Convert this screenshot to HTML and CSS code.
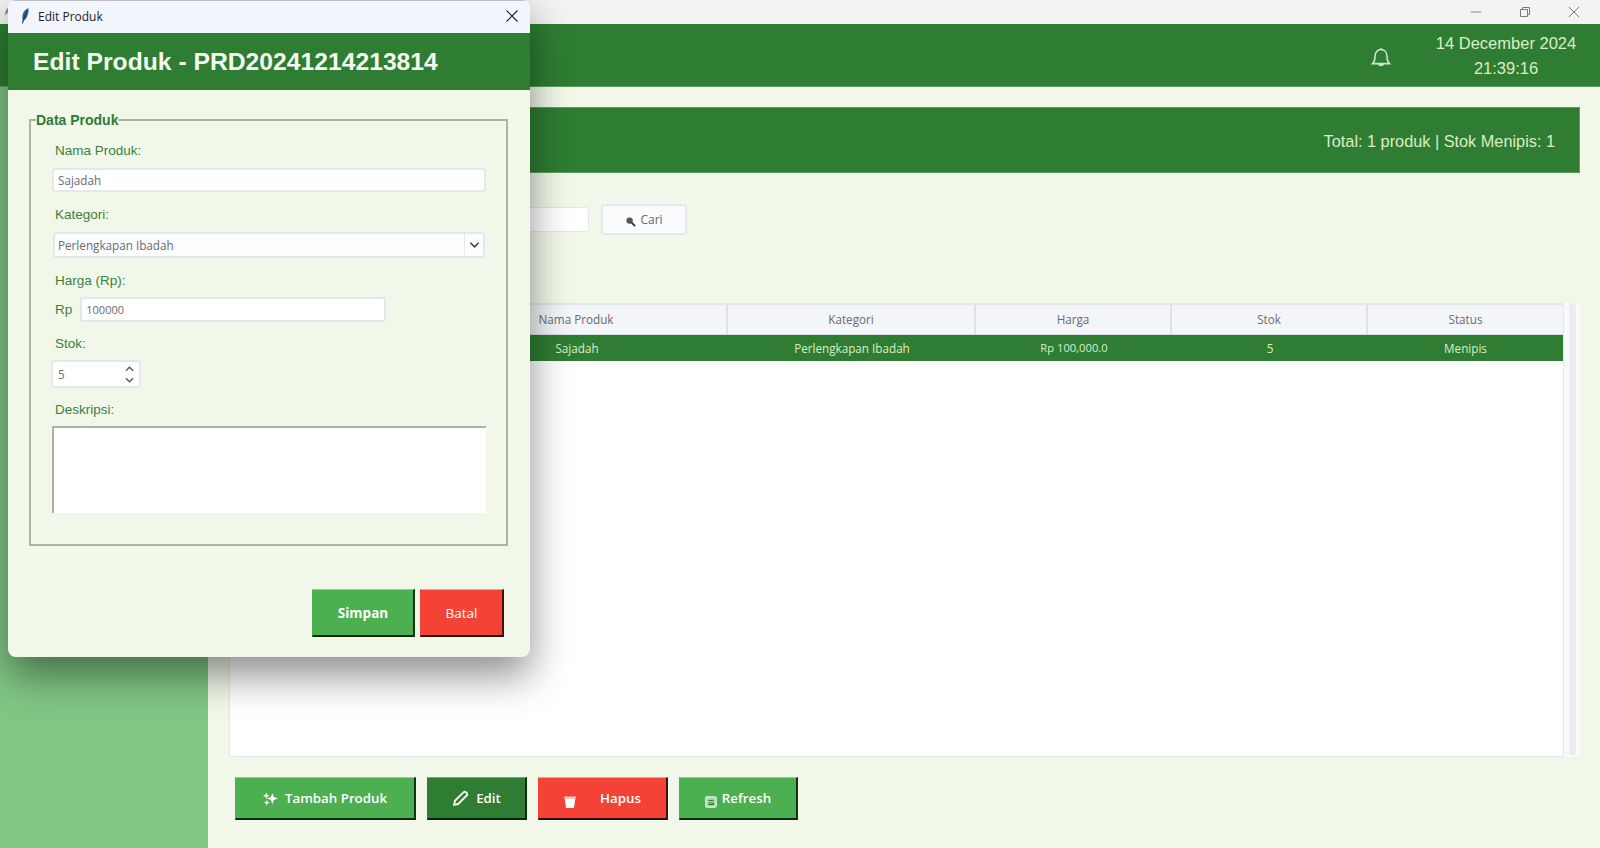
FILE: index.html
```html
<!DOCTYPE html>
<html lang="id">
<head>
<meta charset="utf-8">
<title>Edit Produk</title>
<link rel="stylesheet" href="styles.css">
</head>
<body>
<div class="app">
  <div class="titlebar">
    <svg class="app-icon" viewBox="0 0 12 20" width="7" height="12"><path d="M10 1C5 3 2 8 2 13l-1 5 2-4c4-2 7-7 7-13z" fill="#7d8a96"/></svg>
    <div class="win-controls">
      <svg class="win-btn" viewBox="0 0 12 12" width="12" height="12"><path d="M1 6h10" stroke="#8a8a8a" fill="none"/></svg>
      <svg class="win-btn" viewBox="0 0 12 12" width="12" height="12"><path d="M1.5 3.5h7v7h-7zM3.5 3.5v-2h7v7h-2" stroke="#7a7a7a" fill="none"/></svg>
      <svg class="win-btn" viewBox="0 0 12 12" width="12" height="12"><path d="M1 1l10 10M11 1L1 11" stroke="#7a7a7a" fill="none"/></svg>
    </div>
  </div>
  <header class="header">
    <svg class="bell" viewBox="0 0 20 20" width="24" height="24"><path d="M3 15.500c1.600-1.600 2-3 2-6 0-3.300 2-5.700 5-5.700s5 2.400 5 5.700c0 3 .4 4.400 2 6zM8 16c.4 1.300 3.600 1.300 4 0M10 3.800V2.500" fill="none" stroke="#c8e6c9" stroke-width="1.300"/></svg>
    <div class="clock">
      <div>14 December 2024</div>
      <div>21:39:16</div>
    </div>
  </header>
  <div class="main">
    <aside class="sidebar"></aside>
    <section class="content">
      <div class="banner">Total: 1 produk | Stok Menipis: 1</div>
      <div class="search">
        <input class="search-input" type="text" aria-label="Cari produk">
        <button class="search-btn" type="button">
          <svg viewBox="0 0 12 12" width="11" height="11"><circle cx="5" cy="5" r="3.500" fill="#555"/><path d="M7 7l4 4" stroke="#333" stroke-width="2"/></svg>
          Cari
        </button>
      </div>
      <div class="table-area">
        <div class="table">
          <div class="row row-head">
            <div class="cell"></div>
            <div class="cell">Nama Produk</div>
            <div class="cell">Kategori</div>
            <div class="cell">Harga</div>
            <div class="cell">Stok</div>
            <div class="cell">Status</div>
          </div>
          <div class="row row-selected">
            <div class="cell"></div>
            <div class="cell">Sajadah</div>
            <div class="cell">Perlengkapan Ibadah</div>
            <div class="cell cell-num">Rp 100,000.0</div>
            <div class="cell">5</div>
            <div class="cell">Menipis</div>
          </div>
        </div>
        <div class="scrollbar"><div class="scroll-thumb"></div></div>
      </div>
      <div class="actions">
        <button class="act act-add" type="button">
          <svg viewBox="0 0 16 16" width="15" height="15"><path d="M10 2l1.500 4.500L16 8l-4.500 1.500L10 14 8.500 9.500 4 8l4.500-1.500z" fill="#fff"/><path d="M3.500 1.500l1 2.500 2.500 1-2.500 1-1 2.500-1-2.500L0 5l2.500-1zM4 9.500l.9 2 2.100.9-2.100.9-.9 2.200-.9-2.200L1 12.400l2.100-.9z" fill="#fff"/></svg>
          Tambah Produk
        </button>
        <button class="act act-edit" type="button">
          <svg viewBox="0 0 16 16" width="17" height="17"><path d="M2 14l.8-3.800L10.800 2.200a1.700 1.700 0 0 1 2.400 0l.6.6a1.700 1.700 0 0 1 0 2.400L5.800 13.200z" fill="none" stroke="#f1f8e9" stroke-width="1.800"/></svg>
          Edit
        </button>
        <button class="act act-del" type="button">
          <svg class="icon-low" viewBox="0 0 12 12" width="12" height="12"><path d="M0 .5h12L11.600 3H.4z" fill="#fbc9c4"/><path d="M.8 3h10.400l-1.200 9H2z" fill="#fff"/></svg>
          Hapus
        </button>
        <button class="act act-refresh" type="button">
          <svg class="icon-low" viewBox="0 0 12 12" width="12" height="12"><rect x=".8" y=".8" width="10.400" height="10.400" rx="1.500" fill="#a5d6a7" stroke="#e8f5e9" stroke-width="1.200"/><path d="M3.500 4.500h5M3.500 7h5v1.500h-5" fill="none" stroke="#2e7d32"/></svg>
          Refresh
        </button>
      </div>
    </section>
  </div>
</div>

<div class="dialog">
  <div class="dlg-title">
    <svg class="feather" viewBox="0 0 8 16" width="8" height="16"><path d="M7.500.3C4 1.300 1.500 4.700 1.400 9c0 1.500.1 2.500.4 3.300L1 16l1.500-3.300C5.500 11.500 8 6 7.500.3z" fill="#2f5f94"/><path d="M6.300 2.500C4.500 6 3 9.500 1.500 15.500" stroke="#16283f" stroke-width=".9" fill="none"/></svg>
    <span class="dlg-title-text">Edit Produk</span>
    <svg class="dlg-close" viewBox="0 0 12 12" width="12" height="12"><path d="M.5.5l11 11M11.500.5l-11 11" stroke="#222" stroke-width="1.100" fill="none"/></svg>
  </div>
  <div class="dlg-head">Edit Produk - PRD20241214213814</div>
  <div class="dlg-body">
    <fieldset class="group">
      <legend class="group-title">Data Produk</legend>
      <label class="lbl lbl-b lbl-first">Nama Produk:</label>
      <input class="entry entry-full" type="text" value="Sajadah">
      <label class="lbl lbl-b">Kategori:</label>
      <div class="combo">
        <span class="combo-text">Perlengkapan Ibadah</span>
        <span class="combo-arrow">
          <svg viewBox="0 0 12 8" width="11" height="8"><path d="M1.500 1.500L6 6l4.500-4.500" fill="none" stroke="#444" stroke-width="1.700"/></svg>
        </span>
      </div>
      <label class="lbl">Harga (Rp):</label>
      <div class="price-row">
        <span class="lbl-inline">Rp</span>
        <input class="entry entry-price" type="text" value="100000">
      </div>
      <label class="lbl lbl-c">Stok:</label>
      <div class="spin">
        <span class="spin-val">5</span>
        <span class="spin-arrows">
          <svg viewBox="0 0 10 6" width="9" height="6"><path d="M1 5l4-4 4 4" fill="none" stroke="#555" stroke-width="1.400"/></svg>
          <svg viewBox="0 0 10 6" width="9" height="6"><path d="M1 1l4 4 4-4" fill="none" stroke="#555" stroke-width="1.400"/></svg>
        </span>
      </div>
      <label class="lbl lbl-c">Deskripsi:</label>
      <textarea class="memo" aria-label="Deskripsi"></textarea>
    </fieldset>
    <div class="dlg-actions">
      <button class="dlg-btn dlg-save" type="button">Simpan</button>
      <button class="dlg-btn dlg-cancel" type="button">Batal</button>
    </div>
  </div>
</div>
</body>
</html>
```
FILE: styles.css
```css
* { box-sizing: border-box; }
html, body { margin: 0; padding: 0; height: 848px; overflow: hidden; }
body { background: #f1f8e9; font-family: "Liberation Sans", Arial, sans-serif; }

.app { display: flex; flex-direction: column; height: 848px; }

.titlebar { height: 24px; background: #f3f3f3; display: flex; align-items: center; justify-content: space-between; padding-left: 4px; }
.win-controls { display: flex; gap: 37px; padding-right: 20px; }
.win-btn { display: block; }

.header { height: 63px; background: #2e7d32; border-bottom: 1px solid #5c9f60; display: flex; align-items: center; justify-content: flex-end; color: #dcedc8; padding: 2px 23px 0 0; }
.bell { margin-right: 42px; margin-top: 1px; }
.clock { width: 142px; text-align: center; font-size: 16.500px; line-height: 25px; white-space: nowrap; }

.main { flex: 1; display: flex; min-height: 0; }
.sidebar { width: 208px; background: #81c784; }
.content { flex: 1; padding: 20px 20px 0; background: #f1f8e9; display: flex; flex-direction: column; }

.banner { height: 66px; background: #2e7d32; border: 1px solid #5c9f60; color: #dcedc8; font-size: 16.300px; display: flex; align-items: center; justify-content: flex-end; padding: 2px 24px 0 0; }

.search { display: flex; align-items: center; gap: 12px; margin-top: 31px; height: 31px; padding-left: 72px; }
.search-input { width: 289px; height: 25px; background: #fff; border: 1px solid #e3e7ee; border-radius: 3px; }
.search-btn { width: 86px; height: 31px; background: #fbfcfe; border: 2px solid #e3e7ee; border-radius: 3px; color: #666; font: 12px "Open Sans", sans-serif; display: flex; align-items: center; justify-content: center; gap: 4px; padding: 0; }
.search-btn svg { margin-top: 4px; }

.table-area { display: flex; height: 454px; margin-top: 68px; padding-left: 1px; }
.table { width: 1335px; height: 454px; background: #fff; border: 1px solid #e4e7ea; border-top-width: 2px; }
.row { display: grid; grid-template-columns: 196px 302px 248px 196px 196px 1fr; font: 11.700px "Open Sans", sans-serif; text-align: center; }
.row-head { height: 30px; background: #f3f5f8; color: #6a6a72; border-bottom: 1px solid #d8dde0; }
.row-head .cell { border-right: 2px solid #dfe3e8; line-height: 28px; }
.row-head .cell:last-child { border-right: 0; }
.row-selected { height: 26px; background: #2e7d32; color: #dcedc8; line-height: 26px; }
.cell-num { font-size: 11.200px; }

.scrollbar { width: 16px; padding: 0 4px 2px 5px; background: #f8f9fa; height: 454px; }
.scroll-thumb { width: 7px; height: 100%; background: #ebecee; border-radius: 3px; }

.actions { display: flex; gap: 11px; margin-top: 20px; padding-left: 7px; }
.act { height: 43px; color: #fff; font: 600 13.300px "Open Sans", sans-serif; display: flex; align-items: center; justify-content: center; gap: 7px; padding: 0; border-style: solid; border-width: 1px 2px 2px 1px; border-color: #8fd092 #123314 #0c2a0e #4caf50; }
.act-add { width: 181px; background: #4caf50; }
.act-edit { width: 100px; background: #2e7d32; border-color: #78a87b #0e2e10 #0a240c #2e7d32; }
.act-del { width: 130px; background: #f44336; gap: 24px; border-color: #f99 #3a1512 #2a0f0d #f44336; }
.act-refresh { width: 119px; background: #4caf50; gap: 5px; }
.icon-low { margin-top: 7px; }

.dialog { position: absolute; left: 8px; top: 0; width: 522px; height: 657px; background: #f1f8e9; border-radius: 8px; box-shadow: 0 18px 40px rgba(0, 0, 0, .45); overflow: hidden; }
.dlg-title { height: 33px; background: #f2f5fb; border-top: 1px solid #b9bdc2; display: flex; align-items: center; padding: 0 12px 2px 13px; }
.feather { margin-right: 9px; }
.dlg-title-text { flex: 1; font: 12px "Open Sans", sans-serif; color: #222; }
.dlg-head { height: 57px; background: #2e7d32; color: #f4f9f0; font-size: 24.700px; font-weight: 700; line-height: 57px; padding-left: 25px; white-space: nowrap; }
.dlg-body { padding: 21px 22px 0 21px; }

.group { margin: 0; padding: 0 20px 31px 21px; height: 435px; border: 2px solid #a9b5a4; min-width: 0; }
.group-title { padding: 0; margin-left: -16px; font-size: 14px; font-weight: 700; line-height: 18px; color: #2e7d32; }

.lbl { display: block; height: 18px; line-height: 18px; font-size: 13.500px; color: #3b8040; padding-left: 3px; margin-top: 14px; margin-bottom: 7px; }
.lbl-first { margin-top: 13px; }
.lbl-b { margin-bottom: 8px; }
.lbl-c { margin-top: 13px; }
.lbl-inline { font-size: 13.500px; color: #3b8040; padding-left: 3px; }

.entry { display: block; background: #fff; border: 2px solid #e3e7ee; border-radius: 3px; color: #6b6b70; font: 11.700px "Open Sans", sans-serif; padding: 0 4px; outline: 0; }
.entry-full { width: 434px; height: 24px; }

.combo { display: flex; align-items: center; width: 432px; height: 26px; margin-left: 1px; padding-bottom: 1px; background: #fcfdfe; border: 2px solid #e3e7ee; border-radius: 3px; color: #6b6b70; font: 11.700px "Open Sans", sans-serif; }
.combo-text { flex: 1; padding-left: 3px; }
.combo-arrow { width: 19px; height: 100%; border-left: 1px solid #e6e8ec; display: flex; align-items: center; justify-content: center; }

.price-row { display: flex; align-items: center; gap: 8px; height: 25px; }
.entry-price { width: 306px; height: 25px; padding-left: 4px; font-size: 11px; }

.spin { display: flex; align-items: center; justify-content: space-between; width: 90px; height: 28px; margin-left: -1px; background: #fff; border: 2px solid #e3e7ee; border-radius: 3px; color: #6b6b70; font: 11.700px "Open Sans", sans-serif; padding: 0 5px; }
.spin-arrows { display: flex; flex-direction: column; gap: 5px; }
.spin-arrows svg { display: block; }

.memo { display: block; width: 434px; height: 87px; margin: 0; padding: 0; background: #fff; border-style: solid; border-width: 2px 0 0 2px; border-color: #a9b5a4; border-radius: 0; resize: none; outline: 0; }

.dlg-actions { display: flex; justify-content: flex-end; gap: 5px; margin-top: 43px; padding-right: 4px; }
.dlg-btn { height: 48px; color: #fff; font: 700 13.500px "Open Sans", sans-serif; padding: 0; border-style: solid; border-width: 1px 2px 2px 1px; }
.dlg-save { width: 103px; background: #4caf50; border-color: #8fd092 #123314 #0c2a0e #4caf50; }
.dlg-cancel { width: 84px; background: #f44336; font-weight: 400; border-color: #f99 #3a1512 #2a0f0d #f44336; }
```
